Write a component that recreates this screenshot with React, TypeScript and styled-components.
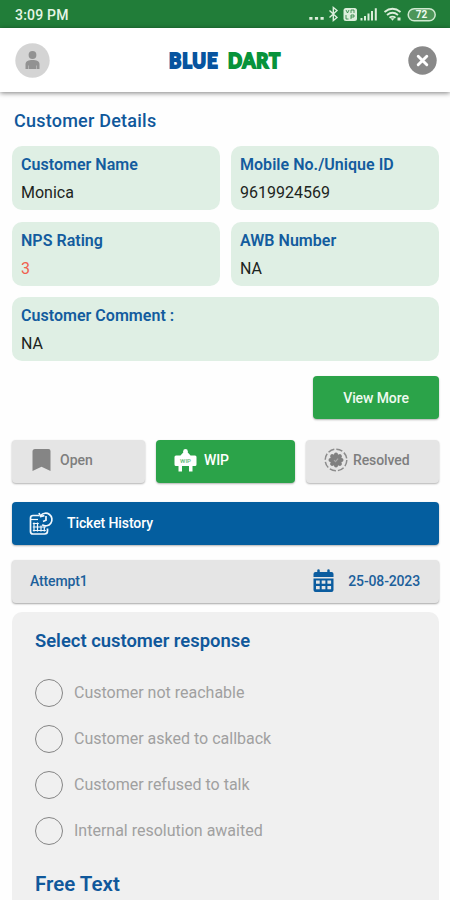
import React from 'react';
import styled, { createGlobalStyle } from 'styled-components';

const blue = '#10589b';

const GlobalStyle = createGlobalStyle`
  *, *::before, *::after { box-sizing: border-box; }
  body { margin: 0; background: #fefefe; font-family: Roboto, "Liberation Sans", sans-serif; overflow: hidden; }
  button { font: inherit; border: 0; padding: 0; }
  h1, h2, p { margin: 0; }
  svg { display: block; flex: none; }
`;

const Screen = styled.div`
  width: 450px;
  height: 900px;
  overflow: hidden;
  display: flex;
  flex-direction: column;
`;

const StatusBar = styled.div`
  height: 28px;
  flex: none;
  padding: 1px 13px 0 15px;
  display: flex;
  align-items: center;
  justify-content: space-between;
  background: #217d39;
  color: #e6f5e6;
`;

const Clock = styled.span`
  font-size: 14px;
  font-weight: 500;
  line-height: 16px;
  letter-spacing: 0.2px;
`;

const Header = styled.header`
  height: 64px;
  flex: none;
  padding: 0 13px 0 15px;
  display: flex;
  align-items: center;
  justify-content: space-between;
  background: #fff;
  box-shadow: 0 1px 5px rgba(0, 0, 0, 0.5);
`;

const Wordmark = styled.div`
  display: flex;
  gap: 9px;
  font-family: Lato, sans-serif;
  font-size: 21px;
  font-weight: 900;
  line-height: 26px;
  letter-spacing: 1px;
  margin-left: -7px;
`;

const Word = styled.span<{ $color: string; $width: number; $scale: number }>`
  color: ${(p) => p.$color};
  width: ${(p) => p.$width}px;
  white-space: nowrap;
  -webkit-text-stroke: 1.9px ${(p) => p.$color};
  transform: scaleX(${(p) => p.$scale});
  transform-origin: left;
`;

const Content = styled.main`
  flex: 1;
  padding: 18px 11px 0 12px;
  display: flex;
  flex-direction: column;
`;

const PageTitle = styled.h1`
  padding-left: 2px;
  margin-bottom: 14px;
  font-size: 18px;
  font-weight: 500;
  line-height: 22px;
  letter-spacing: 0.23px;
  color: ${blue};
`;

const CardGrid = styled.div`
  display: grid;
  grid-template-columns: 1fr 1fr;
  gap: 12px 11px;
`;

const Card = styled.section<{ $wide?: boolean }>`
  height: 64px;
  padding: 9px 9px 0;
  border-radius: 10px;
  background: #dfefe4;
  ${(p) => p.$wide && 'grid-column: 1 / -1; margin-top: -1px;'}
`;

const Label = styled.h2`
  font-size: 16px;
  font-weight: 600;
  line-height: 20px;
  letter-spacing: 0.03px;
  color: #135c9e;
`;

const Value = styled.p<{ $alert?: boolean }>`
  margin-top: 7.5px;
  font-size: 16px;
  line-height: 20px;
  color: ${(p) => (p.$alert ? '#f0604e' : '#1c2420')};
`;

const ViewMore = styled.button`
  width: 126px;
  height: 43px;
  margin-top: 15px;
  align-self: flex-end;
  border-radius: 4px;
  background: #2ba349;
  color: #effaf0;
  font-size: 14px;
  font-weight: 500;
  letter-spacing: -0.1px;
  box-shadow: 0 1px 2px rgba(0, 0, 0, 0.3);
`;

const Tabs = styled.div`
  margin-top: 21px;
  display: grid;
  grid-template-columns: 133px 139px 133px;
  gap: 11px;
`;

const Tab = styled.button<{ $active?: boolean; $gap: number; $left: number }>`
  height: 43px;
  padding: 0 0 3px ${(p) => p.$left}px;
  display: flex;
  align-items: center;
  gap: ${(p) => p.$gap}px;
  border-radius: 4px;
  background: ${(p) => (p.$active ? '#2ba349' : '#e5e5e5')};
  color: ${(p) => (p.$active ? '#fff' : '#7e7e7e')};
  font-size: 14px;
  font-weight: 500;
  box-shadow: 0 1px 2px rgba(0, 0, 0, 0.3);
`;

const TabText = styled.span<{ $spacing?: number }>`
  letter-spacing: ${(p) => p.$spacing ?? 0}px;
  line-height: 18px;
`;

const HistoryBar = styled.div`
  height: 43px;
  margin-top: 19px;
  padding: 0 17px 1px;
  display: flex;
  align-items: center;
  gap: 13px;
  border-radius: 4px;
  background: #045e9f;
  color: #fff;
  font-size: 14px;
  font-weight: 500;
  letter-spacing: -0.1px;
  box-shadow: 0 1px 2px rgba(0, 0, 0, 0.3);
`;

const AttemptRow = styled.div`
  height: 43px;
  margin-top: 15px;
  padding: 0 19px 2px 18px;
  display: flex;
  align-items: center;
  border-radius: 4px;
  background: #e5e5e5;
  color: #1c609b;
  font-size: 14px;
  font-weight: 500;
  letter-spacing: -0.15px;
  box-shadow: 0 1px 2px rgba(0, 0, 0, 0.35);
`;

const AttemptName = styled.span`
  flex: 1;
`;

const AttemptDate = styled.span`
  margin-left: 14px;
`;

const Panel = styled.section`
  flex: 1;
  margin-top: 9px;
  padding: 17px 22px 0 23px;
  border-radius: 10px 10px 0 0;
  background: #f0f0f0;
`;

const PanelTitle = styled.h2<{ $size: number }>`
  font-size: ${(p) => p.$size}px;
  font-weight: 600;
  line-height: 24px;
  color: ${blue};
`;

const Options = styled.div`
  margin: 17px 0 18px;
`;

const Option = styled.label`
  height: 46px;
  display: flex;
  align-items: center;
  gap: 11px;
  color: #a0a0a0;
  font-size: 16px;
  line-height: 20px;
`;

const Radio = styled.input`
  appearance: none;
  width: 28px;
  height: 28px;
  margin: 0;
  border: 1.4px solid #858585;
  border-radius: 50%;
`;

const StatusIcons = () => (
  <svg width="129" height="20" viewBox="308 5 129 20" fill="#dceedb">
    <path d="M309.300 17h3.200v2.800h-3.200zM314.900 17h3.200v2.800h-3.200zM320.500 17h3.200v2.800h-3.200z" />
    <path d="M329.500 10.500l7.500 7-3.700 3V7.500l3.700 3-7.500 7" fill="none" stroke="#dceedb" strokeWidth="1.400" />
    <rect x="343.500" y="8" width="13.500" height="13" rx="2.500" />
    <path d="M346 10l1.500 3 1.500-3M351 13v-3h3v3M346 15v4h2.500M351 19v-4h3v2h-3" fill="none" stroke="#217d39" strokeWidth=".8" />
    <path d="M360.500 18h2v2.500h-2zM364 16h2v4.500h-2zM367.500 13.500h2v7h-2zM371 11h2v9.500h-2zM374.800 8.200h2v12.300h-2z" />
    <g fill="none" stroke="#dceedb" strokeWidth="1.900">
      <path d="M384.500 12q8-6.500 16 0M387 15q5.500-4.300 11 0M389.500 17.700q3-2.200 6 0" />
    </g>
    <path d="M390.500 18.300h4l-2 2.400zM397.500 17.500h3v3h-3z" />
    <rect x="408.200" y="8.700" width="27" height="12" rx="6" fill="#4c9659" stroke="#cfe9d0" strokeWidth="1.500" />
    <text x="421.500" y="18.300" textAnchor="middle" fontSize="10" fontWeight="700" fill="#effaf0">72</text>
  </svg>
);

const Avatar = () => (
  <svg width="35" height="35" viewBox="0 0 35 35">
    <circle cx="17.500" cy="17.500" r="17.200" fill="#d4d4d4" />
    <circle cx="17.500" cy="12" r="3.900" fill="#929292" />
    <path d="M10.500 26v-4.500c0-3.500 3-4.500 7-4.500s7 1 7 4.500V26z" fill="#929292" />
    <path d="M13.500 22.500V26M21.500 22.500V26" stroke="#bcbcbc" strokeWidth=".8" />
  </svg>
);

const CloseIcon = () => (
  <svg width="29" height="29" viewBox="0 0 29 29">
    <circle cx="14.500" cy="14.500" r="14.200" fill="#898989" />
    <path d="M10.200 10.200l8.600 8.600M18.800 10.200l-8.600 8.600" stroke="#fff" strokeWidth="2.900" strokeLinecap="round" />
  </svg>
);

const BookmarkIcon = () => (
  <svg width="19" height="24" viewBox="0 0 19 24">
    <path d="M3 1h13.500Q18.500 1 18.500 3v20L9.500 18.700.5 23V3.500Q.5 1 3 1z" fill="#858585" />
  </svg>
);

const SignIcon = () => (
  <svg width="23" height="25" viewBox="0 0 23 25" fill="#fff">
    <circle cx="11.500" cy="3.300" r="2.300" />
    <path d="M11.500 2l5.500 6H6zM2 7.500h19q1.500 0 1.500 1.500v7.500Q22.500 18 21 18H2Q.5 18 .5 16.500V9Q.5 7.500 2 7.500z" />
    <path d="M4.500 17h3.500v6.500H4.500zM15 17h3.500v6.500H15z" />
    <text x="11.500" y="15" textAnchor="middle" fontSize="6" fill="#65b978">WIP</text>
  </svg>
);

const TEETH = [0, 45, 90, 135, 180, 225, 270, 315];

const ResolvedIcon = () => (
  <svg width="24" height="24" viewBox="0 0 24 24">
    <circle cx="12" cy="12" r="10.800" fill="none" stroke="#8c8c8c" strokeWidth="1.500" strokeDasharray="6.400 2.080" />
    <circle cx="12" cy="12" r="6" fill="#808080" />
    {TEETH.map((a) => (
      <circle key={a} cx="12" cy="6.500" r="2" fill="#808080" transform={`rotate(${a} 12 12)`} />
    ))}
    <path d="M10 12.200l1.500 1.500 2.600-3" fill="none" stroke="#aaa" strokeWidth="1.100" />
  </svg>
);

const HistoryIcon = () => (
  <svg width="25" height="25" viewBox="0 0 25 25" fill="none" stroke="#f2f8fd" strokeWidth="1.700">
    <path d="M10 4.500H4Q1.500 4.500 1.500 7v13.500Q1.500 23 4 23h11.500q3 0 3-3V17.500" />
    <path d="M1.500 8.500H9" strokeWidth="1.200" />
    <path d="M5 11.500v9M8.500 11.500v9M12 14.500v6M15.300 16v4.500M3.800 12.500h6M3.800 16h13M3.800 19.500h13" strokeWidth="1.200" />
    <path d="M11.800 4.500A6.300 6.300 0 1 1 13.200 13.800M10 2l1.600 3.500 3.800-.8M17 5v4.200l-3 1.300" />
  </svg>
);

const CalendarIcon = () => (
  <svg width="21" height="24" viewBox="0 0 21 24">
    <path d="M2.500 3H18.500Q20.500 3 20.500 5v3H.5V5Q.5 3 2.500 3zM.5 9.500h20V21q0 2-2 2h-16q-2 0-2-2z" fill="#0b5c9f" />
    <path d="M5.500 1.500V5M15.500 1.500V5" stroke="#0b5c9f" strokeWidth="2.500" strokeLinecap="round" />
    <path d="M3 11.500h3.700v3.200H3zM8.700 11.500h3.700v3.200H8.700zM14.400 11.500h3.700v3.200h-3.700zM3 17h3.700v3.200H3zM8.700 17h3.700v3.200H8.700zM14.400 17h3.700v3.200h-3.700z" fill="#e5e5e5" />
  </svg>
);

const OPTIONS = [
  'Customer not reachable',
  'Customer asked to callback',
  'Customer refused to talk',
  'Internal resolution awaited',
];

export default function App() {
  return (
    <Screen>
      <GlobalStyle />
      <StatusBar>
        <Clock>3:09 PM</Clock>
        <StatusIcons />
      </StatusBar>
      <Header>
        <Avatar />
        <Wordmark>
          <Word $color="#07549f" $width={50} $scale={0.88}>BLUE</Word>
          <Word $color="#07933b" $width={55} $scale={0.88}>DART</Word>
        </Wordmark>
        <CloseIcon />
      </Header>
      <Content>
        <PageTitle>Customer Details</PageTitle>
        <CardGrid>
          <Card>
            <Label>Customer Name</Label>
            <Value>Monica</Value>
          </Card>
          <Card>
            <Label>Mobile No./Unique ID</Label>
            <Value>9619924569</Value>
          </Card>
          <Card>
            <Label>NPS Rating</Label>
            <Value $alert>3</Value>
          </Card>
          <Card>
            <Label>AWB Number</Label>
            <Value>NA</Value>
          </Card>
          <Card $wide>
            <Label>Customer Comment :</Label>
            <Value>NA</Value>
          </Card>
        </CardGrid>
        <ViewMore>View More</ViewMore>
        <Tabs>
          <Tab $left={20} $gap={9}>
            <BookmarkIcon />
            <TabText>Open</TabText>
          </Tab>
          <Tab $active $left={18} $gap={7}>
            <SignIcon />
            <TabText $spacing={-0.1}>WIP</TabText>
          </Tab>
          <Tab $left={18} $gap={5}>
            <ResolvedIcon />
            <TabText $spacing={-0.1}>Resolved</TabText>
          </Tab>
        </Tabs>
        <HistoryBar>
          <HistoryIcon />
          Ticket History
        </HistoryBar>
        <AttemptRow>
          <AttemptName>Attempt1</AttemptName>
          <CalendarIcon />
          <AttemptDate>25-08-2023</AttemptDate>
        </AttemptRow>
        <Panel>
          <PanelTitle $size={18.4}>Select customer response</PanelTitle>
          <Options>
            {OPTIONS.map((text) => (
              <Option key={text}>
                <Radio type="radio" name="response" />
                {text}
              </Option>
            ))}
          </Options>
          <PanelTitle $size={20.5}>Free Text</PanelTitle>
        </Panel>
      </Content>
    </Screen>
  );
}
